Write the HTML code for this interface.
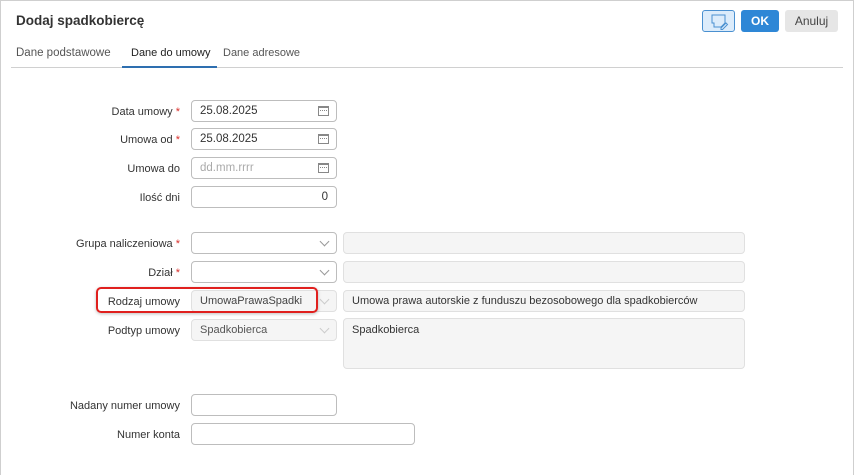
<!DOCTYPE html>
<html><head><meta charset="utf-8"><style>
*{box-sizing:border-box;margin:0;padding:0}
body{width:854px;height:475px;background:#fff;font-family:"Liberation Sans",sans-serif;font-size:12px;color:#333;position:relative;overflow:hidden}
.frame{position:absolute;left:0;top:0;width:854px;height:475px;border:1px solid #cfcfcf;border-bottom:none}
.a{position:absolute;white-space:nowrap}
.lbl{position:absolute;right:674px;text-align:right;white-space:nowrap;font-size:11px;color:#333;margin-top:1px}
.req{color:#d9302c}
.in{position:absolute;border:1px solid #bdbdbd;border-radius:4px;background:#fff;height:22px;padding:0 8px;line-height:21px;font-size:11.5px;white-space:nowrap;overflow:hidden}
.dis{background:#f5f5f5;border-color:#e0e0e0;color:#555}
.cal{position:absolute;right:7px;top:5px;width:11px;height:10px;border:1px solid #888;border-top-width:2px}
.cal:after{content:"";position:absolute;left:1px;top:2px;width:7px;height:1px;border-top:1px dotted #888}
.chev{position:absolute;right:8px;top:5px;width:7px;height:7px;border-right:1px solid #999;border-bottom:1px solid #999;transform:rotate(45deg)}
</style></head><body>
<div class="frame"></div>
<div class="a" style="left:16px;top:13px;font-size:13.5px;font-weight:bold;color:#333">Dodaj spadkobiercę</div>
<div class="a" style="left:702px;top:10px;width:33px;height:22px;border:1px solid #4a90d0;border-radius:3px;background:#dcecfb">
<svg width="33" height="22" viewBox="0 0 33 22" style="position:absolute;left:-1px;top:-1px"><path d="M10 5h13v8l-4 4h-7v-4h-2z" fill="none" stroke="#4a90d0" stroke-width="1"/><path d="M19 18l5-5 1.5 1.5-5 5h-1.5z" fill="none" stroke="#4a90d0"/></svg></div>
<div class="a" style="left:741px;top:10px;width:38px;height:22px;background:#2e87d6;border-radius:3px;color:#fff;font-weight:bold;text-align:center;line-height:22px">OK</div>
<div class="a" style="left:785px;top:10px;width:53px;height:22px;background:#e6e6e6;border-radius:3px;color:#444;text-align:center;line-height:22px">Anuluj</div>
<div class="a" style="left:16px;top:47px;color:#555;font-size:11.5px">Dane podstawowe</div>
<div class="a" style="left:131px;top:47px;color:#222;font-size:11px">Dane do umowy</div>
<div class="a" style="left:223px;top:47px;color:#555;font-size:11px">Dane adresowe</div>
<div class="a" style="left:11px;top:67px;width:832px;height:1px;background:#d0d0d0"></div>
<div class="a" style="left:122px;top:66px;width:95px;height:2px;background:#2e6fb0"></div>

<div class="lbl" style="top:105px">Data umowy <span class="req">*</span></div>
<div class="in" style="left:191px;top:100px;width:146px">25.08.2025<span class="cal"></span></div>
<div class="lbl" style="top:133px">Umowa od <span class="req">*</span></div>
<div class="in" style="left:191px;top:128px;width:146px">25.08.2025<span class="cal"></span></div>
<div class="lbl" style="top:162px">Umowa do</div>
<div class="in" style="left:191px;top:157px;width:146px;color:#aaa">dd.mm.rrrr<span class="cal"></span></div>
<div class="lbl" style="top:191px">Ilość dni</div>
<div class="in" style="left:191px;top:186px;width:146px;text-align:right">0</div>

<div class="lbl" style="top:237px">Grupa naliczeniowa <span class="req">*</span></div>
<div class="in" style="left:191px;top:232px;width:146px"><span class="chev"></span></div>
<div class="in dis" style="left:343px;top:232px;width:402px"></div>
<div class="lbl" style="top:266px">Dział <span class="req">*</span></div>
<div class="in" style="left:191px;top:261px;width:146px"><span class="chev"></span></div>
<div class="in dis" style="left:343px;top:261px;width:402px"></div>
<div class="lbl" style="top:295px">Rodzaj umowy</div>
<div class="in dis" style="left:191px;top:290px;width:146px;color:#444;font-size:11px">UmowaPrawaSpadki<span class="chev" style="border-color:#ccc"></span></div>
<div class="in dis" style="left:343px;top:290px;width:402px;color:#333;font-size:11px">Umowa prawa autorskie z funduszu bezosobowego dla spadkobierców</div>
<div class="a" style="left:96px;top:287px;width:222px;height:26px;border:2px solid #e0201e;border-radius:5px;box-shadow:0 1px 3px rgba(0,0,0,.25)"></div>
<div class="lbl" style="top:324px">Podtyp umowy</div>
<div class="in dis" style="left:191px;top:319px;width:146px;font-size:11px">Spadkobierca<span class="chev" style="border-color:#ccc"></span></div>
<div class="in dis" style="left:343px;top:318px;width:402px;height:51px;padding-top:2px;color:#333;font-size:11px;line-height:18px">Spadkobierca</div>

<div class="lbl" style="top:399px">Nadany numer umowy</div>
<div class="in" style="left:191px;top:394px;width:146px"></div>
<div class="lbl" style="top:428px">Numer konta</div>
<div class="in" style="left:191px;top:423px;width:224px"></div>
</body></html>
